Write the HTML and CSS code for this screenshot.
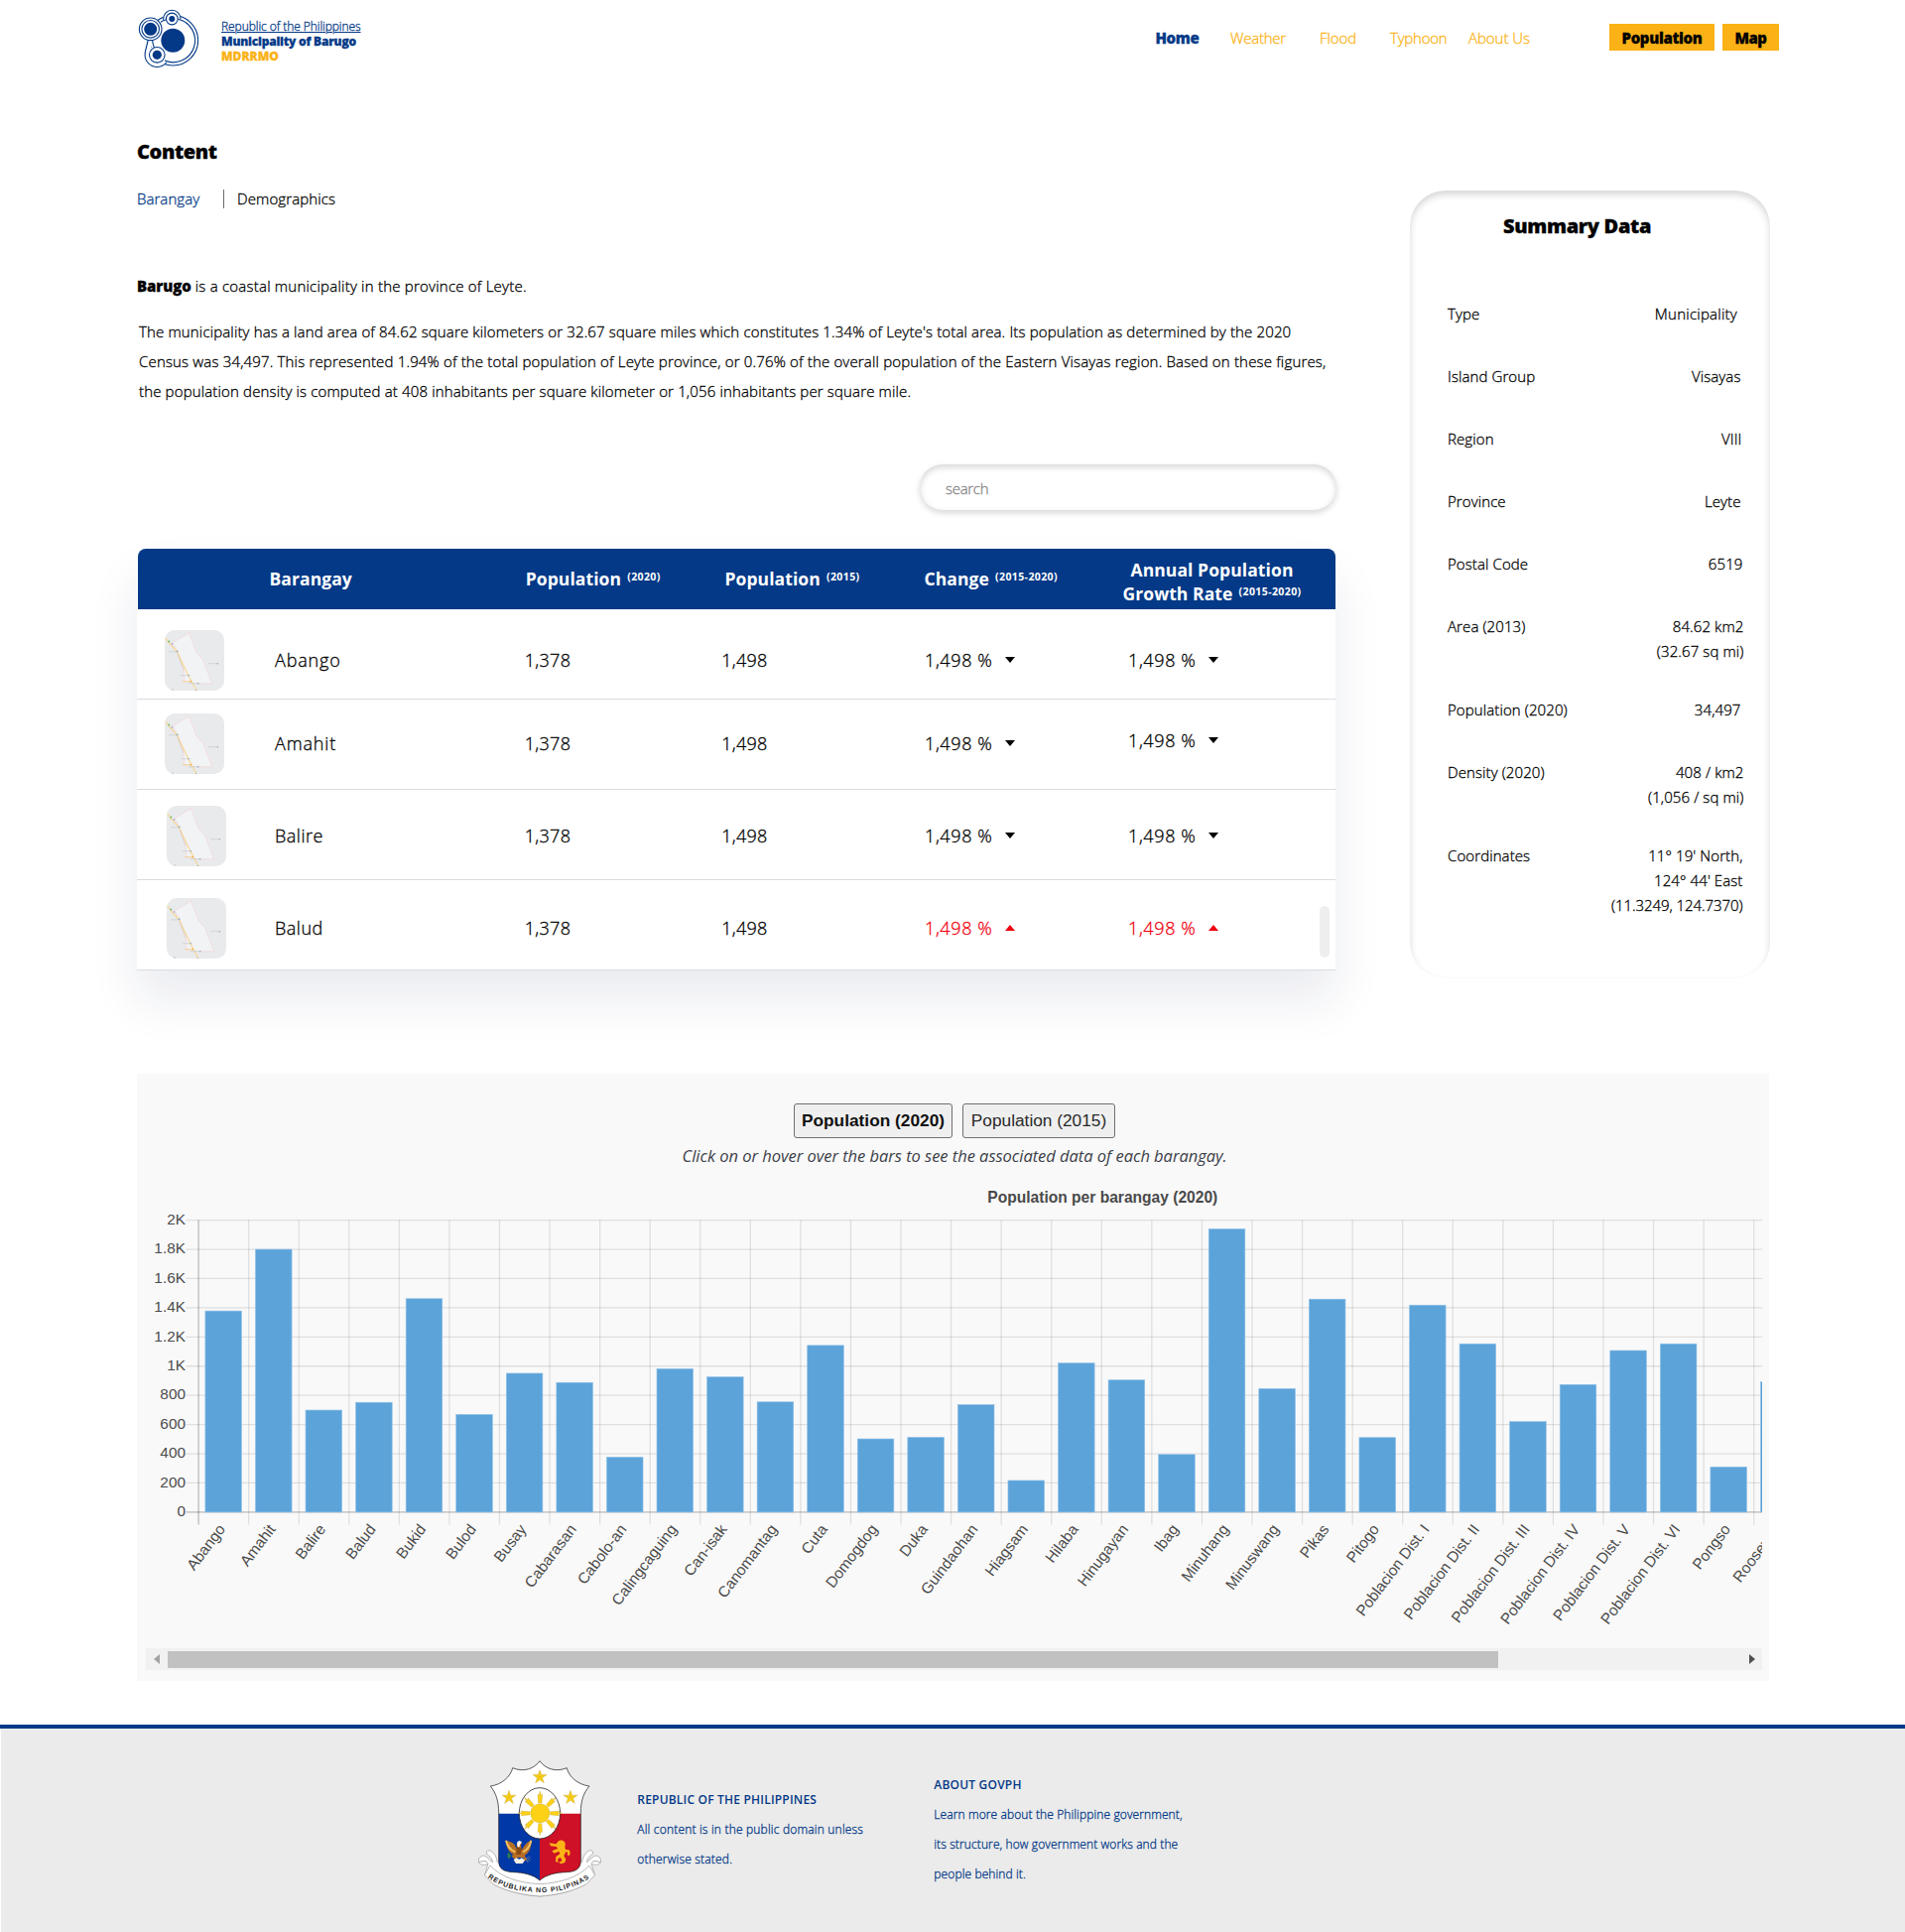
FILE: index.html
```html
<!DOCTYPE html>
<html lang="en">
<head>
<meta charset="utf-8">
<title>Municipality of Barugo - Population</title>
<link rel="stylesheet" href="styles.css">
</head>
<body>
<svg width="0" height="0" class="defs" aria-hidden="true">
  <defs>
    <symbol id="map-thumb" viewBox="0 0 60 61">
      <rect width="60" height="61" fill="#e9eaec"/>
      <path d="M24.5 2.700 8 12.700l5 9 6 18 .8 12 6 2h22L38.800 30.300l-6.600-7.600z" fill="#f1f3f5" stroke="#f3d6d7" stroke-width=".7"/>
      <path d="M0 7l5 6.500 7.500 8.500L24 46l8 15" fill="none" stroke="#f6d795" stroke-width="1.200"/>
      <path d="M13 24l6 16" fill="none" stroke="#d3bdb2" stroke-width=".5"/>
      <path d="M4 21.800h9M44 33.700h8M16 45.700h7M24 53.700h9M5 60.300h3" stroke="#c6cfd4" stroke-width=".8"/>
      <path d="M18 51.700h8" stroke="#f5cb86" stroke-width=".8"/>
      <circle cx="4.300" cy="11.400" r="1" fill="#6fbb70"/><circle cx="7.500" cy="14" r=".9" fill="#b0aee0"/>
      <circle cx="26.300" cy="51.700" r=".9" fill="#f2ad50"/>
      <g fill="#8ea6b1"><circle cx="12.700" cy="21.400" r=".8"/><circle cx="53.300" cy="33.700" r=".8"/><circle cx="24.300" cy="45.700" r=".8"/><circle cx="33.800" cy="53.700" r=".8"/><circle cx="8" cy="60.300" r=".7"/><circle cx="31.500" cy="60.500" r=".6"/></g>
    </symbol>
    <symbol id="down" viewBox="0 0 10 6"><path d="M0 0h10L5 6z" fill="currentColor"/></symbol>
    <symbol id="up" viewBox="0 0 10 6"><path d="M0 6h10L5 0z" fill="currentColor"/></symbol>
    <symbol id="star" viewBox="-22 -22 44 44"><path d="M0-21 5-6.500 21-6.500 8 3 13 18.500 0 9-13 18.500-8 3-21-6.500-5-6.500z" fill="#fcd116" stroke="#b79a2c" stroke-width="1"/><path d="M0 0V-15M0 0 14-4M0 0 9 12M0 0-9 12M0 0-14-4" stroke="#c9a41c" stroke-width=".8"/></symbol>
  </defs>
</svg>

<header class="site-header">
  <svg class="logo" viewBox="0 0 62 60" fill="none" stroke="#043987" stroke-width="1.100">
    <circle cx="36.300" cy="32.700" r="25.300"/>
    <path d="M11.500 31 7.500 41.500M20 31l-2 8" stroke="#fff" stroke-width="7"/>
    <g fill="#fff">
      <circle cx="35.300" cy="11" r="8.700"/><circle cx="20.300" cy="47.300" r="12.200"/>
    </g>
    <path d="M11 27l-3 17 11 2 5-17z" fill="#fff" stroke="none"/>
    <path d="M11.400 31.500 8.300 44.500M16 31.500 14.500 40"/>
    <circle cx="36.300" cy="32.700" r="23" fill="#fff" stroke="none"/>
    <path d="M24 14.200A22 22 0 0 1 29.500 11.700M41.500 11.300A22 22 0 1 1 28 53M17.500 40A22 22 0 0 1 15.500 31.500"/>
    <circle cx="35.300" cy="11" r="5.900" fill="#fff"/>
    <circle cx="13.700" cy="21.300" r="11.300" fill="#fff"/><circle cx="13.700" cy="21.300" r="8.800"/>
    <circle cx="20.300" cy="47.300" r="7.800" fill="#fff"/>
    <g fill="#043987" stroke="none"><circle cx="36.300" cy="32.700" r="12"/><circle cx="13.700" cy="21.300" r="6.500"/><circle cx="35.300" cy="11" r="3"/><circle cx="20.300" cy="47.300" r="4.600"/></g>
  </svg>
  <div class="brand">
    <a class="republic">Republic of the Philippines</a>
    <span class="muni">Municipality of Barugo</span>
    <span class="office">MDRRMO</span>
  </div>
  <nav class="nav">
    <a class="active">Home</a><a class="w">Weather</a><a>Flood</a><a class="w">Typhoon</a><a>About Us</a>
    <a class="btn">Population</a><a class="btn btn-map">Map</a>
  </nav>
</header>

<main class="main">
  <section class="left">
    <h1 class="title">Content</h1>
    <div class="tabs"><a class="tab-current">Barangay</a><span class="bar"></span><a>Demographics</a></div>
    <p class="intro"><b>Barugo</b> is a coastal municipality in the province of Leyte.</p>
    <p class="about">The municipality has a land area of 84.62 square kilometers or 32.67 square miles which constitutes 1.34% of Leyte's total area. Its population as determined by the 2020<br><span class="second">Census was 34,497. This represented 1.94% of the total population of Leyte province, or 0.76% of the overall population of the Eastern Visayas region. Based on these figures,</span><br><span class="last">the population density is computed at 408 inhabitants per square kilometer or 1,056 inhabitants per square mile.</span></p>
    <div class="search">search</div>
    <div class="table">
      <div class="thead">
        <span></span><span>Barangay</span><span>Population <sup>(2020)</sup></span><span>Population <sup>(2015)</sup></span><span>Change <sup>(2015-2020)</sup></span><span class="two">Annual Population<br>Growth Rate <sup>(2015-2020)</sup></span>
      </div>
      <div class="row r1"><svg class="thumb"><use href="#map-thumb"/></svg><span class="name">Abango</span><span>1,378</span><span>1,498</span><span class="pct">1,498 %<svg class="tri"><use href="#down"/></svg></span><span class="pct">1,498 %<svg class="tri"><use href="#down"/></svg></span></div>
      <div class="row r2"><svg class="thumb"><use href="#map-thumb"/></svg><span class="name">Amahit</span><span>1,378</span><span>1,498</span><span class="pct">1,498 %<svg class="tri"><use href="#down"/></svg></span><span class="pct raised">1,498 %<svg class="tri"><use href="#down"/></svg></span></div>
      <div class="row r3"><svg class="thumb"><use href="#map-thumb"/></svg><span class="name">Balire</span><span>1,378</span><span>1,498</span><span class="pct">1,498 %<svg class="tri"><use href="#down"/></svg></span><span class="pct">1,498 %<svg class="tri"><use href="#down"/></svg></span></div>
      <div class="row r4"><svg class="thumb"><use href="#map-thumb"/></svg><span class="name">Balud</span><span>1,378</span><span>1,498</span><span class="pct red">1,498 %<svg class="tri"><use href="#up"/></svg></span><span class="pct red">1,498 %<svg class="tri"><use href="#up"/></svg></span></div>
      <i class="thumb-scroll"></i>
    </div>
  </section>

  <aside class="card">
    <h2>Summary Data</h2>
    <dl>
      <div class="item"><dt>Type</dt><dd class="in6">Municipality</dd></div>
      <div class="item"><dt>Island Group</dt><dd class="in3">Visayas</dd></div>
      <div class="item"><dt>Region</dt><dd class="in2">VIII</dd></div>
      <div class="item"><dt>Province</dt><dd class="in3">Leyte</dd></div>
      <div class="item"><dt>Postal Code</dt><dd class="in1">6519</dd></div>
      <div class="item tall"><dt>Area (2013)</dt><dd>84.62 km2<br>(32.67 sq mi)</dd></div>
      <div class="item"><dt>Population (2020)</dt><dd class="in3">34,497</dd></div>
      <div class="item tall"><dt>Density (2020)</dt><dd>408 / km2<br>(1,056 / sq mi)</dd></div>
      <div class="item"><dt>Coordinates</dt><dd class="in1">11° 19' North,<br>124° 44' East<br><span class="tight">(11.3249, 124.7370)</span></dd></div>
    </dl>
  </aside>
</main>

<section class="chart-panel">
  <div class="toggle"><button class="on">Population (2020)</button><button>Population (2015)</button></div>
  <p class="hint">Click on or hover over the bars to see the associated data of each barangay.</p>
  <svg class="chart" id="chart" viewBox="0 0 1638.400 469" width="1638.400" height="469"></svg>
  <div class="hscroll">
    <svg viewBox="0 0 6 10"><path d="M6 0v10L0 5z" fill="#a3a3a3"/></svg>
    <i class="hthumb"></i>
    <svg viewBox="0 0 6 10"><path d="M0 0v10l6-5z" fill="#505050"/></svg>
  </div>
</section>

<footer class="footer">
  <svg class="emblem" viewBox="30 125 385 425">
    <defs>
      <clipPath id="shield"><path id="shield-path" d="M222 133C205 156 175 168 140 154 134 180 108 204 73 209 90 230 98 255 98 290V436C98 460 116 468 142 469 172 470 202 476 222 494 242 476 272 470 302 469 328 468 346 460 346 436V290C346 255 354 230 372 209 336 204 310 180 304 154 269 168 239 156 222 133z"/></clipPath>
    </defs>
    <g fill="#fff" stroke="#8a8a8a" stroke-width="1.800">
      <path d="M38 440C34 425 48 414 60 422L94 452C92 464 82 462 76 456L66 442C60 432 48 434 38 440z"/>
      <path d="M406 440C410 425 396 414 384 422L350 452C352 464 362 462 368 456L378 442C384 432 396 434 406 440z"/>
      <path d="M64 404C78 400 92 420 94 440L92 452 76 448C84 436 76 424 64 416 60 412 60 406 64 404z"/>
      <path d="M380 404C366 400 352 420 350 440L352 452 368 448C360 436 368 424 380 416 384 412 384 406 380 404z"/>
      <path d="M38 440C44 448 58 450 66 442L56 478 84 505C130 530 175 538 222 542 269 538 314 530 360 505L388 478 378 442C386 450 400 448 406 440"/>
      <path d="M72 449C105 485 160 502 222 505 284 502 339 485 372 449L389 478 362 506C315 531 268 538 222 542 176 538 129 531 82 506L55 478z"/>
    </g>
    <g clip-path="url(#shield)">
      <path fill="#fff" d="M60 120H390V292H60z"/><path fill="#0038a8" d="M60 292H222V500H60z"/><path fill="#ce1126" d="M222 292H390V500H222z"/>
    </g>
    <use href="#shield-path" fill="none" stroke="#222" stroke-width="2.200"/>
    <ellipse cx="222" cy="291" rx="62" ry="77" fill="#fff" stroke="#222" stroke-width="2.400"/>
    <g fill="#fcd116" stroke="#b08d1c" stroke-width=".8">
      <g id="rays"><path id="ray" d="M218 260 216 233 220 237 223 224 226 237 230 233 228 260z"/><use href="#ray" transform="rotate(90 223 291)"/><use href="#ray" transform="rotate(180 223 291)"/><use href="#ray" transform="rotate(270 223 291)"/></g>
      <use href="#rays" transform="rotate(45 223 291)"/>
      <circle cx="223" cy="291" r="29"/>
    </g>
    <use href="#star" x="200" y="159" width="44" height="44"/><use href="#star" x="107" y="221" width="44" height="44"/><use href="#star" x="293" y="221" width="44" height="44"/>
    <g>
      <path d="M120 373C130 377 142 378 147 388L154 402 152 384 158 377 168 379 165 388 168 402C174 392 178 380 196 373 198 396 188 412 176 419L184 432 168 437 174 426 158 424 146 430 136 420 143 416C128 408 120 394 120 373z" fill="#b86f24"/>
      <path d="M120 373C124 392 134 402 148 408M196 373C192 392 184 402 171 408" fill="none" stroke="#f0c060" stroke-width="6"/>
      <path d="M154 378 160 374 168 378 162 386 160 396 154 390z" fill="#fff"/>
      <path d="M152 396C158 392 164 394 168 398L164 416H152z" fill="#8a4a14"/>
      <path d="M143 432 151 426 160 430 168 426 177 433 170 443H150z" fill="#f4f0e4"/>
      <path d="M126 408l9 10-5 12-6-8z" fill="#2e7d4f"/><path d="M183 424l9 12M180 428l7 12M186 420l9 9" stroke="#c9b18a" stroke-width="1.500"/>
    </g>
    <path d="M276 378C283 368 296 372 299 381 300 389 296 395 301 402 314 398 317 410 311 420L305 417C308 409 305 406 300 409L295 420 301 430 298 440 286 444 280 440 290 434 284 424 276 430 278 440 270 437 271 422 283 414 280 406 266 412 259 405 268 401 277 398 272 392 255 390 251 381 261 382 272 384z" fill="#fcb316"/>
    <path id="motto" d="M60 482C100 514 160 530 222 530 284 530 344 514 388 474" fill="none"/>
    <text class="motto"><textPath href="#motto" startOffset="6" textLength="324">REPUBLIKA NG PILIPINAS</textPath></text>
  </svg>
  <div class="fcol fcol-a"><h3>REPUBLIC OF THE PHILIPPINES</h3><p>All content is in the public domain unless<br>otherwise stated.</p></div>
  <div class="fcol fcol-b"><h3>ABOUT GOVPH</h3><p>Learn more about the Philippine government,<br>its structure, how government works and the<br>people behind it.</p></div>
</footer>
<script src="chart.js"></script>
</body>
</html>
```
FILE: styles.css
```css
* { box-sizing: border-box; }
body { margin: 0; width: 1920px; background: #fff; color: #000; font: 300 15px/20px "Open Sans", "Noto Sans", sans-serif; -webkit-text-stroke: .3px; }
h1, h2, h3, p, dl, dd { margin: 0; }
.defs { position: absolute; }

.site-header { display: flex; align-items: flex-start; height: 78px; padding-left: 138px; }
.logo { width: 62px; height: 60px; margin-top: 8px; flex: none; }
.brand { display: flex; flex-direction: column; align-items: flex-start; width: 942px; margin: 19px 0 0 23px; font-size: 12px; line-height: 15px; color: #043987; }
.republic { letter-spacing: -.07px; text-decoration: underline; text-underline-offset: 1px; text-decoration-thickness: 1px; }
.muni { font-weight: 800; letter-spacing: -.22px; }
.office { font-weight: 800; color: #fbb216; }
.nav { display: grid; grid-template-columns: 75px 90px 71px 79px 142px 106px 57px; color: #fbb216; letter-spacing: -.05px; padding-top: 28px; }
.nav .w { letter-spacing: -.22px; }
.nav .active { margin-left: -.5px; color: #043987; font-weight: 800; letter-spacing: -.38px; }
.nav .btn { height: 27px; margin-top: -4px; padding-top: 1px; background: #fbb216; color: #000; font-weight: 800; line-height: 27px; text-align: center; letter-spacing: -.33px; }
.nav .btn-map { margin-left: 8px; width: 57px; letter-spacing: -.5px; }

.main { display: grid; grid-template-columns: 1208px 363px; column-gap: 75px; align-items: start; padding-left: 138px; height: 1004px; }
.left { padding-top: 61px; }
.title { font-size: 20px; font-weight: 800; line-height: 28px; letter-spacing: -.4px; }
.tabs { display: flex; height: 20px; margin-top: 23px; letter-spacing: .11px; }
.tab-current { width: 87px; color: #043987; letter-spacing: .06px; }
.bar { width: 1px; height: 19px; margin: 1px 13px 0 0; background: #6e6e6e; }
.intro { margin-top: 66px; line-height: 24px; letter-spacing: .225px; }
.intro b { font-weight: 800; letter-spacing: -.1px; }
.about { margin: 19px 0 0 2px; line-height: 30px; white-space: nowrap; letter-spacing: .146px; }
.second { letter-spacing: .17px; }
.last { letter-spacing: .152px; }
.search { width: 420px; height: 46px; margin: 59px 0 0 789px; padding: 14px 26px 12px; border-radius: 23px; color: #858585; letter-spacing: -.3px; box-shadow: inset 0 3px 6px rgba(0,0,0,.16), 0 3px 6px rgba(0,0,0,.16); }
.table { position: relative; margin-top: 39px; height: 425px; border-radius: 8px 8px 0 0; background: #fff; box-shadow: 0 30px 50px rgba(20,30,90,.09); font-size: 18px; line-height: 24px; }
.thead, .row { display: grid; grid-template-columns: 139px 251.800px 198.400px 204.800px 205px 1fr; align-items: start; }
.thead { height: 61px; margin-left: 1px; padding-top: 18px; grid-template-columns: 132.500px 258.200px 200.800px 201px 189.500px 201px; background: #043987; border-radius: 8px 8px 0 0; color: #fff; font-size: 17.500px; font-weight: 700; white-space: nowrap; letter-spacing: .08px; -webkit-text-stroke: 0; }
.thead sup { margin-left: 1.500px; vertical-align: 5.500px; font-size: 10.500px; line-height: 0; letter-spacing: .4px; }
.thead .two { margin-top: -9px; text-align: center; }
.row { height: 91px; border-bottom: 1px solid #d9dde2; letter-spacing: .3px; }
.row > span { padding-top: 18px; }
.row .name { letter-spacing: .85px; }
.row .pct { letter-spacing: .62px; }
.row .raised { margin-top: -3px; }
.thumb { width: 60px; height: 61px; margin-left: 28px; border-radius: 10px; }
.r1 { padding-top: 21px; } .r2 { padding-top: 14px; } .r3 { padding-top: 16px; } .r4 { padding-top: 18px; }
.r3 .thumb, .r4 .thumb { margin-left: 30px; }
.row.r3 .name, .row.r4 .name { letter-spacing: .5px; }
.tri { width: 10px; height: 6px; margin-left: 12.500px; vertical-align: 4px; }
.red { color: #f00010; }
.thumb-scroll { position: absolute; right: 6px; bottom: 13px; width: 10px; height: 52px; border-radius: 5px; background: #eee; }

.card { height: 794px; margin-top: 114px; padding: 22px 26.500px 0 38px; border-radius: 36px; box-shadow: inset 0 4px 7px rgba(0,0,0,.16); }
.card h2 { padding-left: 56px; font-size: 20px; font-weight: 800; line-height: 28px; letter-spacing: -.32px; }
.card dl { margin-top: 62px; line-height: 25px; letter-spacing: .1px; }
.item { display: flex; justify-content: space-between; height: 63px; }
.item.tall { height: 84px; }
.item dd { text-align: right; white-space: nowrap; }
.item .in1 { margin-right: 1px; }
.item .in2 { margin-right: 2px; }
.item .in3 { margin-right: 3px; }
.item .in6 { margin-right: 6.500px; letter-spacing: .25px; }
.tight { letter-spacing: -.07px; }

.chart-panel { width: 1645px; height: 612px; margin-left: 138px; padding-top: 30px; background: #f9f9f9; -webkit-text-stroke: 0; }
.toggle { display: flex; gap: 10px; padding-left: 662px; }
.toggle button { width: 154px; height: 35px; padding: 0; border: 1px solid #707070; border-radius: 3px; background: #efefef; color: #2a2a2a; font: 17.300px "Liberation Sans", Arial, sans-serif; }
.toggle .on { width: 160px; color: #111; font-weight: 700; }
.hint { padding-left: 549.500px; margin-top: 6px; font-size: 16.500px; font-style: italic; font-weight: 400; line-height: 24px; color: #3c4048; letter-spacing: -.03px; }
.chart { display: block; margin-top: 8px; }
.chart text { font: 15.400px "Liberation Sans", Arial, sans-serif; fill: #4c4c4c; }
.chart .chart-title { font-size: 15.600px; font-weight: 700; fill: #4a4a4a; }
.hscroll { display: flex; align-items: center; width: 1629.400px; height: 22px; margin: 7px 0 0 9px; padding: 0 7.500px; background: #f1f1f1; }
.hscroll svg { width: 6px; height: 10px; }
.hthumb { width: 1340.500px; height: 17px; margin: 0 auto 0 8.500px; background: #c1c1c1; }

.footer { display: flex; height: 209px; margin-top: 44px; padding-left: 480px; border-top: 4px solid #043987; background: #ebebeb; box-shadow: inset 1px 0 #fff; color: #043987; font-size: 12px; line-height: 30px; white-space: nowrap; letter-spacing: .19px; }
.emblem { width: 128.300px; height: 141.700px; margin-top: 29.700px; }
.motto { font: 700 21px "Liberation Sans", Arial, sans-serif; fill: #222; letter-spacing: 0; -webkit-text-stroke: 0; }
.footer h3 { font-size: 12px; font-weight: 600; letter-spacing: .2px; -webkit-text-stroke: 0; }
.fcol-a { width: 299px; margin: 57px 0 0 34px; }
.fcol-b { margin-top: 42px; letter-spacing: .11px; }
```
FILE: chart.js
```javascript
const data = [
  ["Abango", 1378], ["Amahit", 1800], ["Balire", 699], ["Balud", 752], ["Bukid", 1462], ["Bulod", 669],
  ["Busay", 951], ["Cabarasan", 888], ["Cabolo-an", 377], ["Calingcaguing", 982], ["Can-isak", 926],
  ["Canomantag", 755], ["Cuta", 1142], ["Domogdog", 502], ["Duka", 513], ["Guindaohan", 736],
  ["Hiagsam", 217], ["Hilaba", 1021], ["Hinugayan", 905], ["Ibag", 395], ["Minuhang", 1940],
  ["Minuswang", 846], ["Pikas", 1459], ["Pitogo", 511], ["Poblacion Dist. I", 1418],
  ["Poblacion Dist. II", 1153], ["Poblacion Dist. III", 620], ["Poblacion Dist. IV", 874],
  ["Poblacion Dist. V", 1107], ["Poblacion Dist. VI", 1153], ["Pongso", 310], ["Roosevelt", 892]
];
const ticks = ["0", "200", "400", "600", "800", "1K", "1.2K", "1.4K", "1.6K", "1.8K", "2K"];
const left = 61.8, right = 1638.4, top0 = 44.6, bottom = 338.9, step = 50.567;
const parts = ['<text class="chart-title" x="973.3" y="27.3" text-anchor="middle">Population per barangay (2020)</text>'];

ticks.forEach((label, i) => {
  const y = bottom - (bottom - top0) * i / 10;
  parts.push(`<path d="M49.500 ${y}H${right}" stroke="#000" stroke-opacity="${i ? 0.1 : 0.25}" stroke-width="1.300"/>`);
  parts.push(`<text x="49" y="${y + 4.3}" text-anchor="end">${label}</text>`);
});
data.forEach(([name, value], i) => {
  const x = left + i * step;
  const h = (bottom - top0) * value / 2000;
  parts.push(`<path d="M${x + 0.3} ${top0}V351.500" stroke="#000" stroke-opacity="${i ? 0.1 : 0.25}" stroke-width="1.300"/>`);
  parts.push(`<rect x="${x + 7.1}" y="${bottom - h}" width="36.600" height="${h}" fill="#5ca3da" stroke="#8fc1e8" stroke-width=".6"/>`);
  parts.push(`<text transform="translate(${x + step / 2 - 1.5} 353.100) rotate(-52.800)" text-anchor="end" dy=".34em">${name}</text>`);
});
document.getElementById("chart").innerHTML = parts.join("");
```
